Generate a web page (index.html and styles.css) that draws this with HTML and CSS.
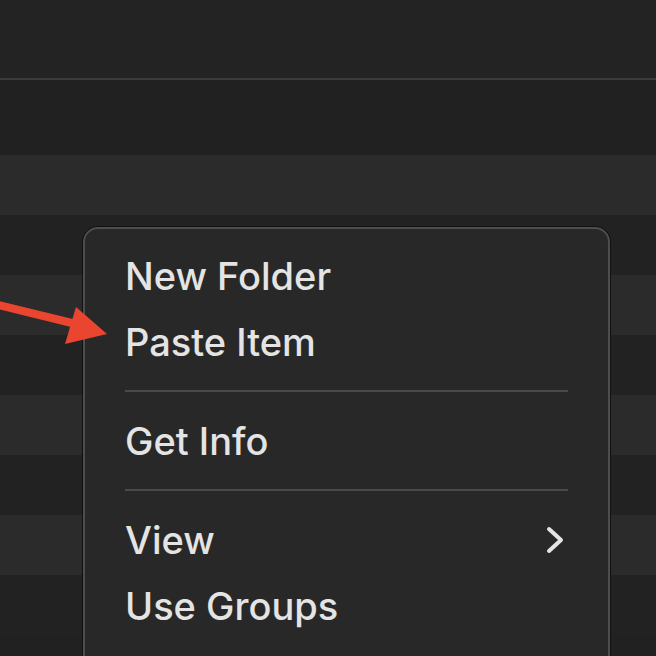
FILE: index.html
```html
<!DOCTYPE html>
<html lang="en">
<head>
  <meta charset="UTF-8">
  <title>Finder context menu</title>
  <link rel="stylesheet" href="styles.css">
</head>
<body>
  <div class="window">
    <div class="toolbar"></div>
    <div class="header"></div>
    <div class="list">
      <div class="row"></div>
      <div class="row"></div>
      <div class="row"></div>
      <div class="row"></div>
      <div class="row"></div>
      <div class="row"></div>
      <div class="row"></div>
      <div class="row"></div>
    </div>

    <div class="menu">
      <div class="menu-item">New Folder</div>
      <div class="menu-item">Paste Item</div>
      <div class="separator"></div>
      <div class="menu-item">Get Info</div>
      <div class="separator"></div>
      <div class="menu-item">
        <span>View</span>
        <svg class="chevron" width="20" height="28" viewBox="0 0 20 28">
          <path d="M4 3 L16 14 L4 25" fill="none" stroke="#e4e4e4" stroke-width="4" stroke-linecap="round" stroke-linejoin="round"/>
        </svg>
      </div>
      <div class="menu-item">Use Groups</div>
    </div>

    <svg class="arrow" width="120" height="60" viewBox="0 290 120 60">
      <line x1="-6" y1="304" x2="80" y2="325" stroke="#e9452f" stroke-width="8"/>
      <polygon points="76,307 107,334 65,344" fill="#e9452f"/>
    </svg>
  </div>
</body>
</html>
```

FILE: styles.css
```css
body {
  margin: 0;
  padding: 0;
  background-color: #212121;
  font-family: 'Inter', 'Liberation Sans', sans-serif;
  overflow: hidden;
}
.window {
  position: relative;
  width: 656px;
  height: 656px;
  overflow: hidden;
}
.toolbar {
  height: 78px;
  background-color: #232323;
  border-bottom: 2px solid #3b3b3b;
}
.header {
  height: 75px;
  background-color: #212121;
}
.row {
  height: 60px;
}
.row:nth-child(odd) {
  background-color: #2b2b2b;
}
.row:nth-child(even) {
  background-color: #222222;
}
.menu {
  position: absolute;
  left: 83px;
  top: 227px;
  width: 527px;
  height: 480px;
  padding: 14px 40px 0;
  box-sizing: border-box;
  background-color: #282828;
  border: 2px solid #4d4d4d;
  border-radius: 15px;
  box-shadow: 0 0 0 1px #121212;
}
.menu-item {
  display: flex;
  justify-content: space-between;
  align-items: center;
  height: 66px;
  line-height: 66px;
  font-size: 38px;
  font-weight: 500;
  color: #e4e4e4;
}
.chevron {
  margin-right: 3px;
}
.separator {
  height: 2px;
  background-color: #4a4a4a;
  margin: 15px 0 16px;
}
.arrow {
  position: absolute;
  left: 0;
  top: 290px;
}
```
